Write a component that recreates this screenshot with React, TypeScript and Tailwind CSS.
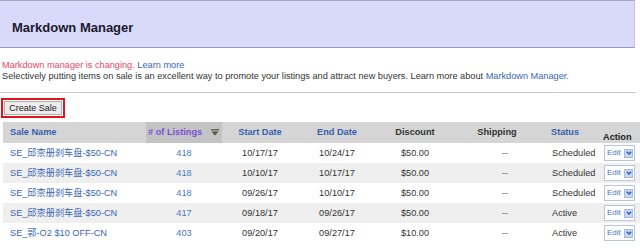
import React from "react";

var rows = [
  { name: "SE_邱柰册刹车盘-$50-CN", qty: "418", start: "10/17/17", end: "10/24/17", disc: "$50.00", status: "Scheduled" },
  { name: "SE_邱柰册刹车盘-$50-CN", qty: "418", start: "10/10/17", end: "10/17/17", disc: "$50.00", status: "Scheduled" },
  { name: "SE_邱柰册刹车盘-$50-CN", qty: "418", start: "09/26/17", end: "10/10/17", disc: "$50.00", status: "Scheduled" },
  { name: "SE_邱柰册刹车盘-$50-CN", qty: "417", start: "09/18/17", end: "09/26/17", disc: "$50.00", status: "Active" },
  { name: "SE_郭-O2 $10 OFF-CN", qty: "403", start: "09/20/17", end: "09/27/17", disc: "$10.00", status: "Active" },
];

function SortIcon() {
  return (
    <svg width="8" height="7" viewBox="0 0 8 7" className="inline-block">
      <rect x="0" y="0" width="8" height="1.5" fill="#6b6b4a" />
      <path d="M0.5 2.5 L7.5 2.5 L4 6.5 Z" fill="#55552f" />
    </svg>
  );
}

function EditButton() {
  return (
    <div className="flex items-center w-[31px] h-[16px] border border-[#b8c6d6] bg-white pl-[2px] pr-[1px] justify-between">
      <span className="text-[#4a78c8] text-[8px] leading-[10px]">Edit</span>
      <span className="w-[9px] h-[9px] bg-[#c9d7f1] border border-[#a8bce0] flex items-center justify-center">
        <svg width="6" height="4" viewBox="0 0 6 4">
          <path d="M0.8 0.8 L3 3 L5.2 0.8" stroke="#2f5fc0" strokeWidth="1.5" fill="none" />
        </svg>
      </span>
    </div>
  );
}

export default function App() {
  return (
    <div className="w-[640px] h-[248px] overflow-hidden bg-white text-[9.2px] leading-[11px] text-[#333]" style={{ fontFamily: '"Liberation Sans", Arial, "Noto Sans CJK SC", sans-serif' }}>
      {/* title band */}
      <div className="h-[48px] w-[635px] bg-[#d9d9fb] border-t border-b border-r border-t-[#a4a4c4] border-b-[#9a9abc] border-r-[#c4c4e4] flex items-end pb-[12px] pl-[12px]">
        <h1 className="text-[13px] leading-[15px] font-bold text-[#1a1a2a]">Markdown Manager</h1>
      </div>

      <div className="pt-[12px] pl-[2px]">
        <p>
          <span className="text-[#e24868]">Markdown manager is changing.</span>{" "}
          <span className="text-[#3a66b4]">Learn more</span>
        </p>
        <p>
          Selectively putting items on sale is an excellent way to promote your listings and attract new buyers. Learn more about{" "}
          <span className="text-[#3a66b4]">Markdown Manager.</span>
        </p>
      </div>

      <div className="mt-[10px] h-px w-[636px] bg-[#c8c8c8]" />

      <div className="mt-[5px] ml-[1px] w-[64px] h-[20px] border-2 border-[#e0141e] p-px">
        <button className="w-full h-full bg-[#ececec] border border-[#b0b0b0] text-[9px] leading-[10px] text-[#222]">Create Sale</button>
      </div>

      <table className="mt-[4px] ml-[3px] w-[637px] table-fixed border-collapse">
        <colgroup>
          <col className="w-[143px]" />
          <col className="w-[76px]" />
          <col className="w-[76px]" />
          <col className="w-[78px]" />
          <col className="w-[78px]" />
          <col className="w-[92px]" />
          <col className="w-[54px]" />
          <col className="w-[40px]" />
        </colgroup>
        <thead>
          <tr className="h-[21px] bg-[#d5d5d5] font-bold">
            <th className="text-left pl-[7px] text-[#3560ae] font-bold">Sale Name</th>
            <th className="text-left pl-[2px] bg-[#c3c3c3] text-[#7a4fd6] font-bold">
              <span># of Listings</span>
              <span className="ml-[9px] align-middle"><SortIcon /></span>
            </th>
            <th className="text-center text-[#3560ae] font-bold">Start Date</th>
            <th className="text-center text-[#3560ae] font-bold">End Date</th>
            <th className="text-center text-[#333] font-bold">Discount</th>
            <th className="text-center pr-[6px] text-[#333] font-bold">Shipping</th>
            <th className="text-left pl-[5px] text-[#3560ae] font-bold">Status</th>
            <th className="text-left pl-[3px] pt-[10px] text-[#222] font-bold">Action</th>
          </tr>
        </thead>
        <tbody>
          {rows.map((r, i) => (
            <tr key={i} className={"h-[20px] " + (i % 2 === 1 ? "bg-[#efefef]" : "bg-white")}>
              <td className="pl-[7px] text-[#3a66b4] whitespace-nowrap">{r.name}</td>
              <td className="text-center text-[#4a78bc]">{r.qty}</td>
              <td className="text-center">{r.start}</td>
              <td className="text-center">{r.end}</td>
              <td className="text-center">{r.disc}</td>
              <td className="text-center pl-[10px] text-[#666]">--</td>
              <td className="pl-[6px]">{r.status}</td>
              <td className="pl-[4px]"><EditButton /></td>
            </tr>
          ))}
        </tbody>
      </table>
    </div>
  );
}
